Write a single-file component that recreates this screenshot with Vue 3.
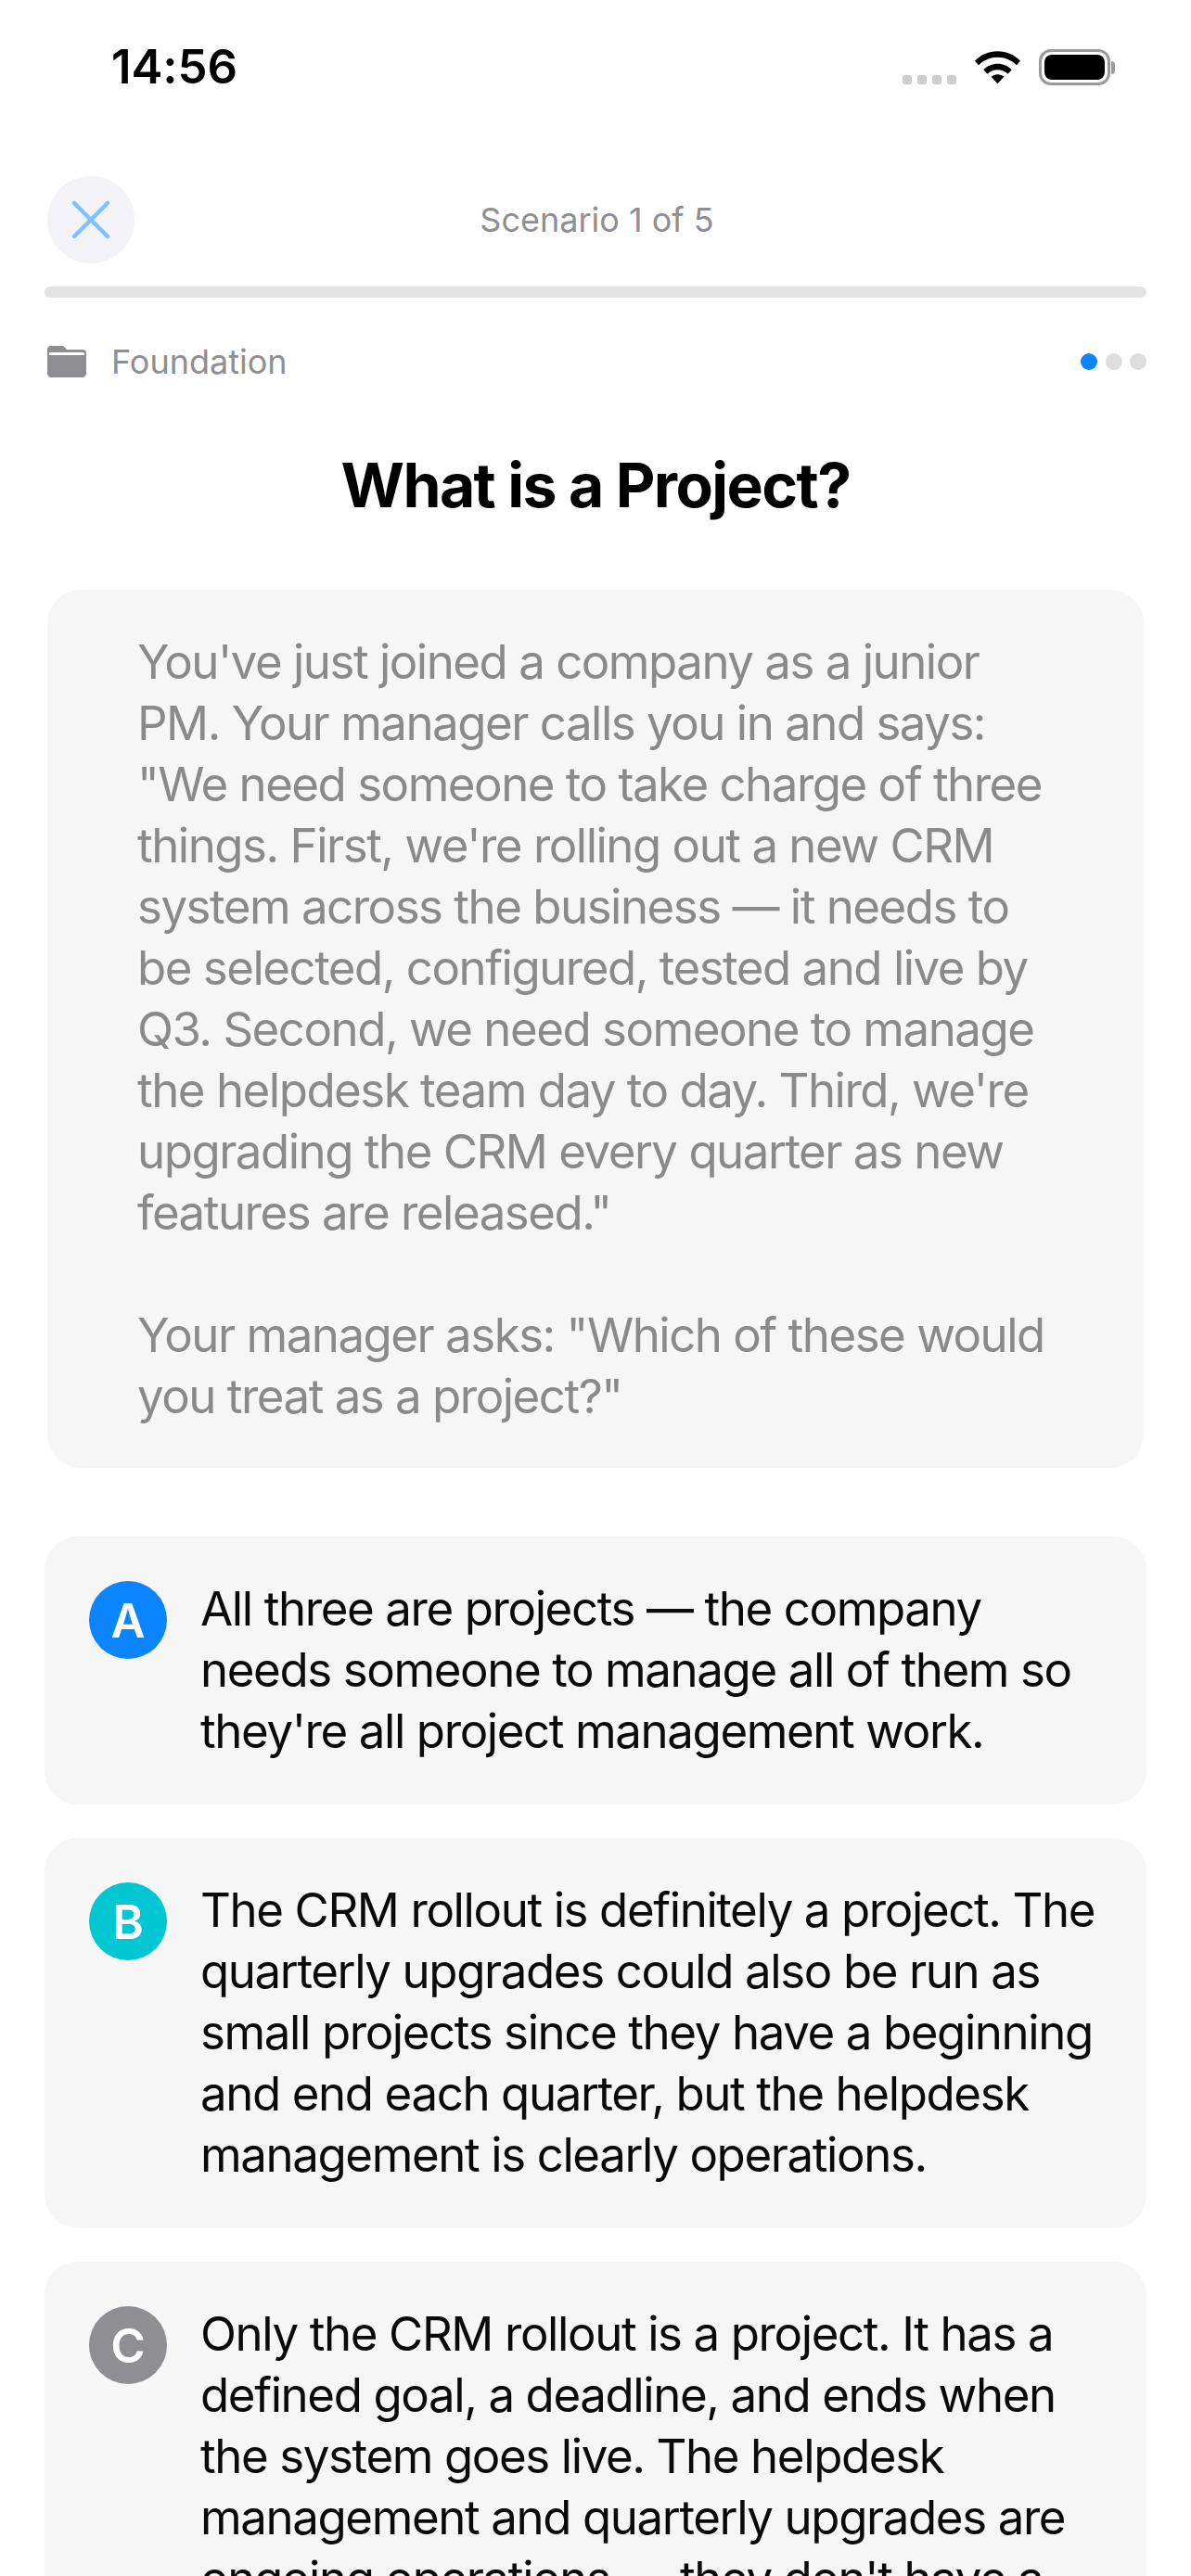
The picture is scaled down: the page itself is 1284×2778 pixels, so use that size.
<template>
  <div class="screen">
    <div class="statusBar">
      <span class="time">14:56</span>
      <div class="statusIcons">
        <div class="signal"><i></i><i></i><i></i><i></i></div>
        <svg class="wifi" width="51" height="38" viewBox="0 0 52 38">
          <path d="M1 12.500C7.800 5.700 16.400 2 26 2s18.200 3.700 25 10.500l-4.200 4.700C41.200 11.700 34 8.600 26 8.600S10.800 11.700 5.200 17.200z" />
          <path d="M10.500 22.200C14.600 18.200 20 15.800 26 15.800s11.400 2.400 15.500 6.400l-4.300 4.600C34.200 24 30.300 22.300 26 22.300s-8.200 1.700-11.200 4.500z" />
          <path d="M26 37.500l-7-7.500c1.900-1.700 4.300-2.700 7-2.700s5.100 1 7 2.700z" />
        </svg>
        <div class="battery">
          <div class="batteryBody"><div class="batteryFill"></div></div>
          <div class="batteryCap"></div>
        </div>
      </div>
    </div>

    <div class="topBar">
      <button class="closeBtn">
        <svg width="42" height="42" viewBox="0 0 42 42">
          <path d="M3 3L39 39M39 3L3 39" stroke="#7fc0ff" stroke-width="4.500" stroke-linecap="round" fill="none" />
        </svg>
      </button>
      <span class="scenarioCount">Scenario 1 of 5</span>
    </div>
    <div class="progress"></div>

    <div class="metaRow">
      <div class="category">
        <svg width="42" height="34" viewBox="0 0 42 34">
          <path d="M4 0h11c2 0 3 .6 4.200 1.800L21 4h17c2.400 0 4 1.600 4 4v21.500c0 2.600-1.800 4.500-4.500 4.500h-33C1.800 34 0 32.100 0 29.500V4c0-2.400 1.600-4 4-4z" fill="#8e8e93" />
          <path d="M2 8.500c0-1 .6-1.500 1.500-1.500h35c.9 0 1.500.5 1.500 1.500V10H2z" fill="#ffffff" />
        </svg>
        <span>Foundation</span>
      </div>
      <div class="dots">
        <i class="active"></i><i></i><i></i>
      </div>
    </div>

    <h1 class="title">What is a Project?</h1>

    <div class="passage">{{ passage }}</div>

    <div class="options">
      <div class="option" v-for="item in options" :key="item.letter">
        <div class="letter" :class="item.cls">{{ item.letter }}</div>
        <p class="optionText">{{ item.text }}</p>
      </div>
    </div>
  </div>
</template>

<script setup>
const passage = `You've just joined a company as a junior PM. Your manager calls you in and says: "We need someone to take charge of three things. First, we're rolling out a new CRM system across the business — it needs to be selected, configured, tested and live by Q3. Second, we need someone to manage the helpdesk team day to day. Third, we're upgrading the CRM every quarter as new features are released."

Your manager asks: "Which of these would you treat as a project?"`

const options = [
  { letter: 'A', cls: 'blue', text: "All three are projects — the company needs someone to manage all of them so they're all project management work." },
  { letter: 'B', cls: 'teal', text: 'The CRM rollout is definitely a project. The quarterly upgrades could also be run as small projects since they have a beginning and end each quarter, but the helpdesk management is clearly operations.' },
  { letter: 'C', cls: 'grey', text: "Only the CRM rollout is a project. It has a defined goal, a deadline, and ends when the system goes live. The helpdesk management and quarterly upgrades are ongoing operations — they don't have a defined end." }
]
</script>

<style>
html, body {
  margin: 0;
  background: #ffffff;
}
body {
  height: 2778px;
  overflow: hidden;
}
</style>

<style scoped>
.screen {
  width: 1284px;
  height: 2778px;
  overflow: hidden;
  background: #ffffff;
  font-family: Inter, "Noto Sans", sans-serif;
  box-sizing: border-box;
}

.statusBar {
  height: 144px;
  padding: 41px 82px 0 120px;
  box-sizing: border-box;
  display: flex;
  justify-content: space-between;
  align-items: flex-start;
}

.time {
  font-weight: 600;
  font-size: 51px;
  line-height: 62px;
  letter-spacing: -0.1px;
  color: #000000;
}

.statusIcons {
  display: flex;
  align-items: flex-start;
  padding-top: 12px;
}

.signal {
  display: flex;
  gap: 6px;
  margin-top: 28px;
  margin-right: 19px;
}

.signal i {
  width: 10px;
  height: 10px;
  border-radius: 3px;
  background: #cdcdcd;
}

.wifi {
  fill: #000000;
  margin-right: 19px;
}

.battery {
  display: flex;
  align-items: center;
  height: 39px;
}

.batteryBody {
  width: 77px;
  height: 39px;
  box-sizing: border-box;
  border: 3px solid #9a9a9a;
  border-radius: 13px;
  padding: 3px;
}

.batteryFill {
  height: 100%;
  background: #000000;
  border-radius: 8px;
}

.batteryCap {
  width: 4px;
  height: 14px;
  margin-left: 1px;
  background: #9a9a9a;
  border-radius: 0 4px 4px 0;
}

.topBar {
  margin-top: 46px;
  padding: 0 51px;
  height: 94px;
  position: relative;
  display: flex;
  align-items: center;
  justify-content: center;
}

.closeBtn {
  position: absolute;
  left: 51px;
  top: 0;
  width: 94px;
  height: 94px;
  border: none;
  padding: 0;
  border-radius: 50%;
  background: #f2f2f7;
  display: flex;
  align-items: center;
  justify-content: center;
}

.scenarioCount {
  margin-left: 3px;
  font-size: 36px;
  line-height: 44px;
  color: #8e8e93;
}

.progress {
  height: 12px;
  margin: 25px 48px 0;
  border-radius: 6px;
  background: #e3e3e3;
}

.metaRow {
  margin: 47px 48px 0 51px;
  height: 44px;
  display: flex;
  justify-content: space-between;
  align-items: center;
}

.category {
  display: flex;
  align-items: center;
  gap: 27px;
  font-size: 36px;
  color: #8e8e93;
}

.dots {
  display: flex;
  gap: 8.500px;
}

.dots i {
  width: 18px;
  height: 18px;
  border-radius: 50%;
  background: #dddddd;
}

.dots .active {
  background: #0a84ff;
}

.title {
  margin: 71px 0 0;
  text-align: center;
  font-size: 66px;
  line-height: 80px;
  font-weight: 700;
  letter-spacing: -1.6px;
  color: #000000;
}

.passage {
  margin: 73px 51px 0;
  padding: 45px 96px 44px 97px;
  background: #f6f6f6;
  border-radius: 36px;
  font-size: 51px;
  line-height: 66px;
  letter-spacing: -1.5px;
  color: #8a8a8a;
  white-space: pre-line;
}

.options {
  margin: 74px 48px 0;
  display: flex;
  flex-direction: column;
  gap: 36px;
}

.option {
  display: flex;
  gap: 36px;
  padding: 45px 48px 46px 48px;
  background: #f6f6f6;
  border-radius: 36px;
}

.letter {
  flex: none;
  width: 84px;
  height: 84px;
  margin-top: 3px;
  border-radius: 50%;
  display: flex;
  align-items: center;
  justify-content: center;
  color: #ffffff;
  font-size: 51px;
  font-weight: 600;
}

.blue { background: #0a84ff; }
.teal { background: #00c7d1; }
.grey { background: #8e8e93; }

.optionText {
  margin: 0;
  font-size: 51px;
  line-height: 66px;
  letter-spacing: -1.4px;
  color: #0a0a0a;
}
</style>
